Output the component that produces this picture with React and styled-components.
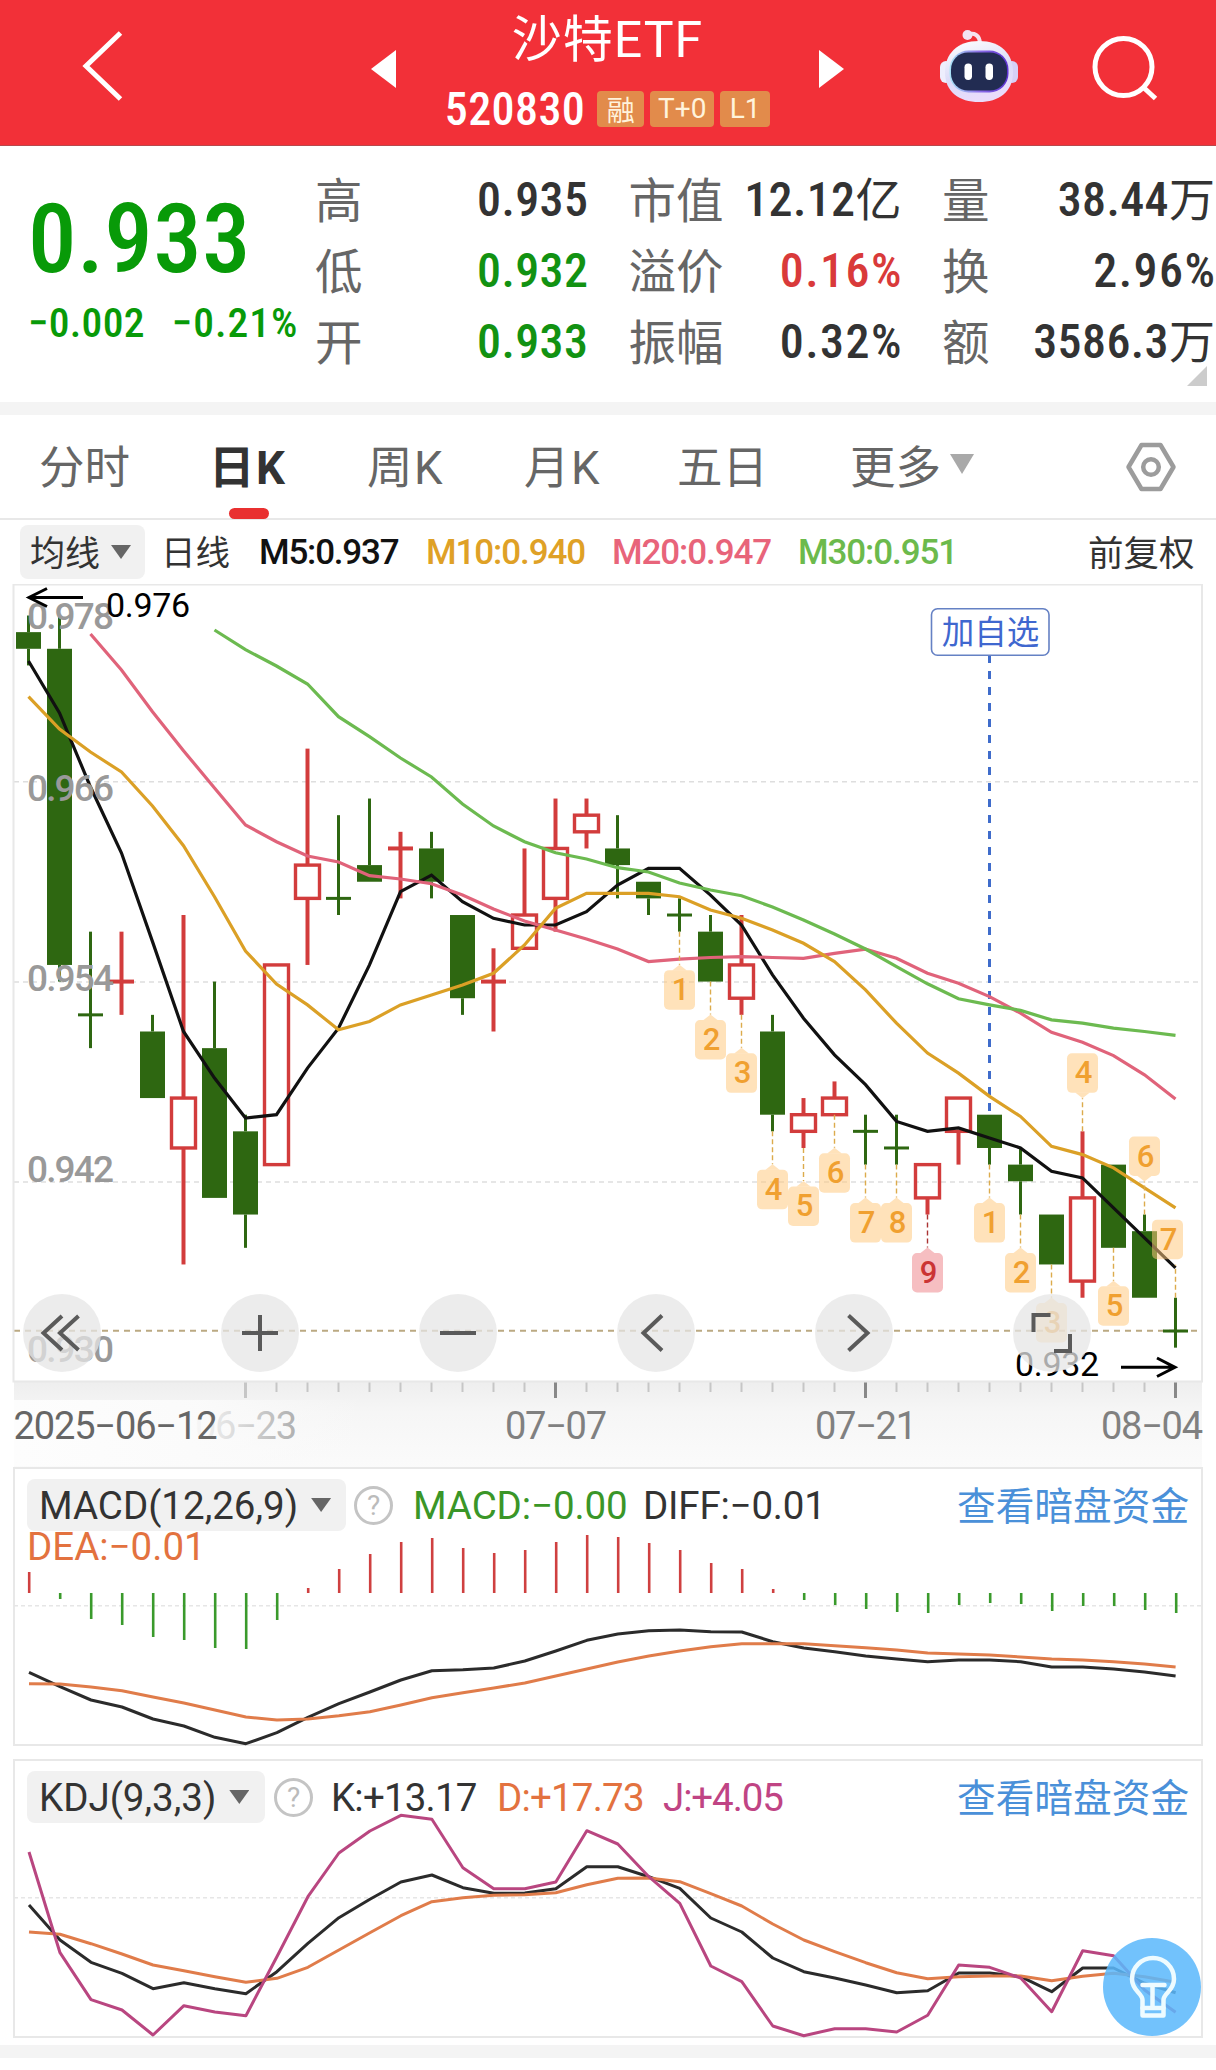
import React from 'react'
import styled, { createGlobalStyle } from 'styled-components'

const GlobalStyle = createGlobalStyle`
  * { box-sizing: border-box; }
  body {
    margin: 0;
    background: #fff;
    color: #333;
    font-family: Roboto, "Noto Sans CJK SC", sans-serif;
    -webkit-font-smoothing: antialiased;
  }
  svg { display: block; }
`

const Page = styled.div`
  width: 1216px;
  height: 2070px;
  overflow: hidden;
  background: #fff;
`

const Text = styled.span`
  font-size: ${(p) => p.$size}px;
  font-weight: ${(p) => p.$weight || 400};
  font-stretch: ${(p) => (p.$narrow ? 75 : 100)}%;
  letter-spacing: ${(p) => p.$spacing || 0}px;
  padding-bottom: ${(p) => p.$lift || 0}px;
  color: ${(p) => p.$color || 'inherit'};
  white-space: nowrap;
`

// ---------- header ----------
const Header = styled.header`
  display: grid;
  grid-template-columns: 371px 25px 423px 25px 95px 80px 64px 1fr;
  height: 146px;
  background: #f23038;
  border-bottom: 1px solid #b8484c;
  color: #fff;
`
const HeaderIcon = styled.div`
  grid-column: ${(p) => p.$col};
  margin-top: ${(p) => p.$top}px;
  padding-left: ${(p) => p.$left || 0}px;
`
const TitleBlock = styled.div`
  grid-column: 3;
  display: flex;
  flex-direction: column;
  align-items: center;
`
const Name = styled.div`
  height: 80px;
  line-height: 80px;
  font-size: 50px;
  letter-spacing: 1px;
`
const CodeRow = styled.div`
  display: flex;
  align-items: center;
  gap: 6px;
  height: 57px;
`
const Badges = styled.div`
  display: flex;
  gap: 6px;
  padding-left: 6px;
`
const Badge = styled.span`
  display: flex;
  align-items: center;
  justify-content: center;
  width: ${(p) => p.$w}px;
  height: 36px;
  border-radius: 4px;
  background: #e28b4b;
  color: #fff3dc;
  font-size: 28px;
`

// ---------- quote ----------
const Quote = styled.section`
  position: relative;
  display: flex;
  height: 256px;
`
const QuoteMain = styled.div`
  width: 316px;
  padding: 45px 0 0 28px;
  color: #089a08;
`
const Price = styled.div`
  font-size: 97px;
  line-height: 97px;
  font-weight: 500;
  font-stretch: 75%;
  letter-spacing: 0.4px;
`
const Changes = styled.div`
  display: flex;
  gap: 27px;
  margin-top: 10px;
  line-height: 50px;
`
const Stats = styled.div`
  display: grid;
  grid-template-columns: repeat(3, 272px);
  grid-auto-rows: 71px;
  column-gap: 41.5px;
  padding-top: 18px;
`
const Stat = styled.div`
  display: flex;
  align-items: center;
  justify-content: space-between;
  font-size: 47.5px;
`
const StatLabel = styled.span`
  margin-left: -1px;
  padding-bottom: 5px;
  color: #666;
`
const StatValue = styled.span`
  color: ${(p) => p.$color || '#333'};
  font-size: 48px;
  line-height: 71px;
  font-weight: 500;
  font-stretch: 75%;
  letter-spacing: ${(p) => p.$spacing}px;
  margin-right: ${(p) => -p.$spacing}px;
`
const Unit = styled.span`
  font-size: 46px;
  font-weight: 400;
  line-height: 1;
`
const Corner = styled.div`
  position: absolute;
  right: 9px;
  bottom: 16px;
  border-left: 20px solid transparent;
  border-bottom: 20px solid #ccc;
`
const Band = styled.div`
  height: 13px;
  margin-top: ${(p) => p.$top || 0}px;
  background: #f4f4f4;
`

// ---------- tabs ----------
const Tabs = styled.nav`
  display: grid;
  grid-template-columns: 173px 155px 157px 153px 173px 275px 1fr;
  align-items: center;
  height: 105px;
  padding-left: 39px;
  border-bottom: 2px solid #e8e8e8;
  font-size: 45.5px;
  color: #666;
`
const Tab = styled.div`
  position: relative;
  display: flex;
  align-items: center;
  gap: 9px;
  height: 100%;
  padding-bottom: 5px;
  margin-left: ${(p) => (p.$on ? -3 : 0)}px;
  letter-spacing: ${(p) => (p.$wide ? 1.5 : 0)}px;
  font-weight: ${(p) => (p.$on ? 700 : 400)};
  color: ${(p) => (p.$on ? '#333' : '#666')};
  &::after {
    content: '';
    display: ${(p) => (p.$on ? 'block' : 'none')};
    position: absolute;
    left: 20px;
    bottom: -1px;
    width: 40px;
    height: 11px;
    border-radius: 6px;
    background: #e93030;
  }
`
const Caret = styled.i`
  flex: none;
  width: ${(p) => p.$w}px;
  height: ${(p) => p.$h}px;
  background: ${(p) => p.$color};
  clip-path: polygon(0 0, 100% 0, 50% 100%);
`

const MaRow = styled.div`
  display: grid;
  grid-template-columns: 141px 98px 167px 186px 186px 290px 1fr;
  align-items: center;
  height: 64px;
  padding-left: 20px;
`
const Chip = styled.div`
  display: flex;
  align-items: center;
  gap: ${(p) => p.$gap}px;
  width: ${(p) => p.$w}px;
  height: ${(p) => p.$h}px;
  padding-left: ${(p) => p.$pad}px;
  border-radius: 8px;
  background: #f1f1f1;
`

// ---------- charts ----------
const ChartArea = styled.section`
  position: relative;
  height: 883px;
`
const Controls = styled.div`
  position: absolute;
  left: 23px;
  top: 710px;
  display: flex;
  gap: 120px;
`
const RoundButton = styled.button`
  width: 78px;
  height: 78px;
  padding: 0;
  border: 0;
  border-radius: 50%;
  background: rgba(229, 229, 229, 0.74);
`
const Panel = styled.section`
  display: grid;
  height: 279px;
  margin-bottom: ${(p) => p.$bottom || 0}px;
  & > * {
    grid-area: 1 / 1;
  }
`
const PanelHead = styled.div`
  display: grid;
  grid-template-columns: ${(p) => p.$cols};
  grid-template-rows: 52px 40px;
  align-content: start;
  align-items: center;
  padding: 12px 0 0 27px;
  z-index: 1;
`
const HeadRow2 = styled.div`
  grid-column: 1 / -1;
  line-height: 40px;
`
const Help = styled.span`
  display: flex;
  align-items: center;
  justify-content: center;
  width: 39px;
  height: 39px;
  border: 3px solid #c4c4c4;
  border-radius: 50%;
  color: #bbb;
  font-size: 28px;
`
const Float = styled.div`
  position: absolute;
  left: 1103px;
  top: 1938px;
`

const GREEN = '#2e6711'
const RED = '#d23c3c'
const px = (i) => 28.5 + 31 * i
// one tick is 0.001 below the 0.976 high
const py = (k) => 615.5 + 16.64 * k

// [up, high, body top, body bottom, low] in ticks
const candles = [
  [0, 0, 1, 2, 3], [0, 0, 2, 21, 22], [0, 19, 24, 24, 26], [1, 19, 22, 22, 24], [0, 24, 25, 29, 29],
  [1, 18, 29, 32, 39], [0, 22, 26, 35, 35], [0, 30, 31, 36, 38], [1, 21, 21, 33, 33], [1, 8, 15, 17, 21],
  [0, 12, 17, 17, 18], [0, 11, 15, 16, 16], [1, 13, 14, 14, 17], [0, 13, 14, 16, 17], [0, 18, 18, 23, 24],
  [1, 20, 22, 22, 25], [1, 14, 18, 20, 20], [1, 11, 14, 17, 19], [1, 11, 12, 13, 14], [0, 12, 14, 15, 17],
  [0, 16, 16, 17, 18], [0, 17, 18, 18, 19], [0, 18, 19, 22, 22], [1, 18, 21, 23, 24], [0, 24, 25, 30, 31],
  [1, 29, 30, 31, 32], [1, 28, 29, 30, 30], [0, 30, 31, 31, 33], [0, 30, 32, 32, 33], [1, 33, 33, 35, 36],
  [1, 29, 29, 31, 33], [0, 30, 30, 32, 33], [0, 32, 33, 34, 36], [0, 36, 36, 39, 39], [1, 31, 35, 40, 41],
  [0, 33, 33, 38, 38], [0, 36, 37, 41, 41], [0, 41, 43, 43, 44],
]
const closes = candles.map((c) => (c[0] ? c[2] : c[3]))

// averages whose window starts before the first candle are given as y values
const averages = [
  { n: 5, color: '#111', from: 0, head: [661, 713, 787, 853] },
  { n: 20, color: '#e0637a', from: 2, head: [634, 670, 711.7, 750.7, 788, 825, 841.7, 856, 862, 875.7, 879, 883.7, 895, 909, 921, 930, 939] },
  { n: 10, color: '#dba026', from: 0, head: [696.7, 729, 752, 772, 806, 845.7, 896.7, 951, 984] },
  { n: 30, color: '#6cba50', from: 6, head: [630, 649.7, 666, 684, 716.7, 736.7, 758, 777, 804, 826, 841.7, 852.7, 859, 867.7, 872, 883, 890, 895.7, 907, 920, 934, 949, 966.7] },
]
const averagePoints = ({ n, from, head }) => {
  const pts = head.map((y, i) => `${px(from + i)},${y}`)
  for (let i = from + head.length; i < closes.length; i++) {
    const sum = closes.slice(i - n + 1, i + 1).reduce((a, b) => a + b, 0)
    pts.push(`${px(i)},${py(sum / n).toFixed(1)}`)
  }
  return pts.join(' ')
}

// [candle, number, above]
const marks = [
  [21, 1], [22, 2], [23, 3], [24, 4], [25, 5], [26, 6], [27, 7], [28, 8], [29, 9],
  [31, 1], [32, 2], [33, 3], [34, 4, 1], [35, 5], [36, 6, 1], [37, 7, 1],
]

function Candle({ i, c }) {
  const [up, high, top, bottom, low] = c
  const x = px(i)
  const color = up ? RED : GREEN
  const w = up ? 4 : 3
  return (
    <g stroke={color} strokeWidth={w} fill="none">
      {high < top && <line x1={x} x2={x} y1={py(high)} y2={py(top)} />}
      {low > bottom && <line x1={x} x2={x} y1={py(bottom)} y2={py(low)} />}
      {top === bottom && <line x1={x - 12.5} x2={x + 12.5} y1={py(top)} y2={py(top)} />}
      {top !== bottom && up === 1 && <rect x={x - 12} y={py(top)} width="24" height={py(bottom) - py(top)} strokeWidth="3.4" />}
      {top !== bottom && up === 0 && <rect x={x - 12.5} y={py(top)} width="25" height={py(bottom) - py(top)} fill={color} stroke="none" />}
    </g>
  )
}

function Mark({ i, n, above }) {
  const x = px(i)
  const edge = py(above ? candles[i][1] : candles[i][4])
  const s = above ? -1 : 1
  const tip = edge + 33 * s
  // the last tag is pushed back inside the frame
  const cx = Math.min(x, 1167.5)
  const hot = n === 9
  const top = above ? tip - 45 : tip + 5.5
  return (
    <g>
      <line x1={x} x2={x} y1={edge} y2={tip} stroke={hot ? '#a33' : '#dcab4c'} strokeWidth="1.4" strokeDasharray="5 3" />
      <g fill={hot ? '#ee8489' : '#ffc87c'} fillOpacity="0.53">
        <path
          d={`M${cx - 10.5} ${top}h21a5 5 0 0 1 5 5v29.5a5 5 0 0 1 -5 5h-21a5 5 0 0 1 -5 -5v-29.5a5 5 0 0 1 5 -5z`}
        />
        {cx === x && <path d={`M${x} ${tip}l-7 ${5.5 * s}h14z`} />}
      </g>
      <text x={cx + 1} y={top + 30} fontSize="31" fontWeight="500" textAnchor="middle" fill={hot ? '#cb3434' : '#f0a030'}>
        {n}
      </text>
    </g>
  )
}

function PriceChart() {
  const grid = [781.8, 982, 1182]
  const scale = [['0.978', 629], ['0.966', 800.5], ['0.954', 991], ['0.942', 1181.5], ['0.930', 1362]]
  return (
    <svg width="1216" height="883" viewBox="0 584 1216 883">
      <defs>
        <linearGradient id="axisShade" x1="0" x2="0" y1="0" y2="1">
          <stop offset="0" stopColor="#eeeeee" />
          <stop offset="0.35" stopColor="#f6f6f6" />
          <stop offset="1" stopColor="#fbfbfb" />
        </linearGradient>
        <linearGradient id="axisFade" x1="0" x2="1" y1="0" y2="0">
          <stop offset="0" stopColor="#fdfdfd" />
          <stop offset="0.53" stopColor="#fbfbfb" stopOpacity="0.95" />
          <stop offset="1" stopColor="#fafafa" stopOpacity="0" />
        </linearGradient>
      </defs>
      <rect x="14" y="1381" width="1188" height="90" fill="url(#axisShade)" />
      {grid.map((y) => (
        <line key={y} x1="14" x2="1202" y1={y} y2={y} stroke="#dedede" strokeWidth="1.4" strokeDasharray="5 4" />
      ))}
      <line x1="14" x2="1202" y1="1330.7" y2="1330.7" stroke="#bba982" strokeWidth="2" strokeDasharray="6 5" />

      {candles.map((c, i) => (
        <Candle key={i} i={i} c={c} />
      ))}
      <line x1="989.5" x2="989.5" y1="655" y2="1112" stroke="#3f6ccb" strokeWidth="3" strokeDasharray="8 8" />
      {averages.map((a) => (
        <polyline key={a.n} points={averagePoints(a)} fill="none" stroke={a.color} strokeWidth="3.2" />
      ))}
      {marks.map(([i, n, above]) => (
        <Mark key={i} i={i} n={n} above={above} />
      ))}

      <rect x="931.5" y="608.7" width="117.5" height="46.5" rx="6" fill="#fff" stroke="#6581c4" strokeWidth="1.6" />
      <text x="990.5" y="644" fontSize="32.5" textAnchor="middle" fill="#3f67cf">加自选</text>

      {scale.map(([t, y]) => (
        <text key={t} x="27" y={y} fontSize="37" fontWeight="500" fill="#999" textLength="87">{t}</text>
      ))}
      <text x="106" y="617" fontSize="34" fill="#000" textLength="84">0.976</text>
      <text x="1015" y="1376" fontSize="34" fill="#000" textLength="84">0.932</text>
      <g stroke="#000" strokeWidth="3" fill="none">
        <path d="M83 597.5H29M47 588.5L29 597.5L47 606.5" />
        <path d="M1121 1367.3H1175M1157 1358L1175 1367.3L1157 1376.5" />
      </g>

      <path d="M13.5 1381.5V584.5H1202V1381.5Z" fill="none" stroke="#e8e8e8" strokeWidth="2" />
      {candles.map((_, i) => {
        if (i < 7) return null
        const major = i % 10 === 7
        return (
          <line key={i} x1={px(i)} x2={px(i)} y1="1382.5" y2={major ? 1398 : 1392} stroke={major && i > 7 ? '#888' : '#c6c6c6'} strokeWidth={major ? 3 : 2} />
        )
      })}
      <g fontSize="38" fill="#808080">
        <text x="195" y="1439" textLength="102">06−23</text>
        <rect x="14" y="1400" width="350" height="66" fill="url(#axisFade)" />
        <text x="505" y="1439" textLength="102">07−07</text>
        <text x="815" y="1439" textLength="102">07−21</text>
        <text x="1101" y="1439" textLength="102">08−04</text>
        <text x="13.5" y="1439" textLength="204" fill="#666">2025−06−12</text>
      </g>
    </svg>
  )
}

const controlIcons = [
  'M0 -17L-18.5 0L0 17M16.5 -17L-2 0L16.5 17',
  'M-18 0H18M0 -18V18',
  'M-18 0H18',
  'M6 -17.5L-12.5 0L6 17.5',
  'M-5.5 -17.5L13.5 0L-5.5 17.5',
  'M-18.5 -1V-18H-1.5M18 1V18H2',
]

const histogram = [21, -6, -26, -32, -44, -47, -55, -56, -27, 5, 24, 39, 51, 55, 45, 40, 43, 51, 58, 56, 50, 43, 30, 24, 4, -7, -12, -16, -19, -20, -12, -10, -11, -18, -13, -13, -17, -20]

// lines are stored in thirds of a pixel below each panel's own origin
const diff = [637, 680, 720, 741, 777, 798, 832, 851, 818, 772, 731, 696, 660, 632, 629, 624, 603, 573, 541, 522, 512, 510, 515, 516, 545, 564, 575, 588, 597, 605, 600, 600, 605, 621, 621, 627, 636, 648]
const dea = [671, 672, 681, 692, 711, 729, 750, 771, 780, 777, 767, 755, 735, 713, 698, 684, 669, 648, 627, 606, 588, 573, 560, 551, 551, 551, 557, 563, 570, 579, 582, 585, 591, 597, 600, 605, 612, 621]
const kLine = [465, 570, 637, 670, 716, 698, 716, 731, 665, 580, 503, 448, 396, 375, 413, 430, 429, 416, 350, 350, 380, 415, 504, 546, 624, 665, 684, 705, 728, 722, 669, 669, 680, 725, 654, 654, 700, 728]
const dLine = [546, 553, 581, 612, 645, 662, 680, 697, 685, 652, 600, 548, 497, 455, 443, 436, 434, 428, 404, 385, 384, 395, 431, 468, 522, 570, 605, 638, 668, 686, 680, 678, 678, 692, 679, 670, 680, 697]
const jLine = [306, 608, 749, 780, 855, 767, 786, 797, 620, 440, 309, 243, 196, 208, 353, 416, 416, 396, 242, 282, 380, 460, 648, 695, 828, 857, 836, 836, 846, 796, 645, 652, 684, 785, 602, 617, 720, 787]

function Line({ data, origin, color }) {
  const pts = data.map((v, i) => `${(29 + 30.99 * i).toFixed(1)},${(origin + v / 3).toFixed(1)}`).join(' ')
  return <polyline points={pts} fill="none" stroke={color} strokeWidth="3" strokeLinejoin="round" />
}

function PanelFrame({ y, mid, children }) {
  return (
    <svg width="1216" height="279" viewBox={`0 ${y} 1216 279`}>
      <rect x="14" y={y + 1} width="1188" height="277" fill="none" stroke="#e8e8e8" strokeWidth="2" />
      <line x1="14" x2="1202" y1={mid} y2={mid} stroke="#e6e6e6" strokeWidth="1.5" strokeDasharray="4 3" />
      {children}
    </svg>
  )
}

function Robot() {
  return (
    <svg width="80" height="76" viewBox="0 0 80 76">
      <defs>
        <linearGradient id="shell" x1="0" x2="0.3" y1="0" y2="1">
          <stop offset="0" stopColor="#ffffff" />
          <stop offset="0.6" stopColor="#dcdcf8" />
          <stop offset="1" stopColor="#e9dcfb" />
        </linearGradient>
        <linearGradient id="rim" x1="0" x2="1">
          <stop offset="0" stopColor="#a9e4f5" />
          <stop offset="0.5" stopColor="#8d6fe8" />
          <stop offset="1" stopColor="#5b2fd0" />
        </linearGradient>
      </defs>
      <path d="M28 5C35 2 41 5 41 14" fill="none" stroke="#f6e2ee" strokeWidth="4" />
      <circle cx="28.5" cy="5" r="5" fill="#f3e3f3" />
      <rect x="1" y="31" width="12" height="22" rx="6" fill="#eeeefd" />
      <rect x="67" y="31" width="12" height="22" rx="6" fill="#d6d0f6" />
      <path d="M40 11C62 11 74 24 74 42C74 62 60 72 40 72C20 72 6 62 6 42C6 24 18 11 40 11Z" fill="url(#shell)" />
      <rect x="10.5" y="20.5" width="59" height="42" rx="19" fill="url(#rim)" />
      <rect x="12" y="22.5" width="56" height="38" rx="17" fill="#222c52" />
      <rect x="25.5" y="33.5" width="7.5" height="16.5" rx="3.7" fill="#fff" />
      <rect x="46.5" y="33.5" width="7.5" height="16.5" rx="3.7" fill="#fff" />
    </svg>
  )
}

const UP = '#d93a3a'
const DOWN = '#129212'
// label, number, unit, color
const stats = [
  ['高', '0.935', ''], ['市值', '12.12', '亿'], ['量', '38.44', '万'],
  ['低', '0.932', '', DOWN], ['溢价', '0.16%', '', UP], ['换', '2.96%', ''],
  ['开', '0.933', '', DOWN], ['振幅', '0.32%', ''], ['额', '3586.3', '万'],
]

function App() {
  return (
    <Page>
      <GlobalStyle />
      <Header>
        <HeaderIcon $col={1} $top={31} $left={82}>
          <svg width="42" height="70" viewBox="0 0 42 70">
            <path d="M38.5 2L4 35L38.5 68" fill="none" stroke="#fff" strokeWidth="5" />
          </svg>
        </HeaderIcon>
        <HeaderIcon $col={2} $top={50}>
          <svg width="25" height="38"><path d="M25 0V38L0 19Z" fill="#fff" /></svg>
        </HeaderIcon>
        <TitleBlock>
          <Name>沙特ETF</Name>
          <CodeRow>
            <Text $size={46} $narrow $weight={500} $spacing={0.4}>520830</Text>
            <Badges>
              <Badge $w={47}>融</Badge>
              <Badge $w={64}>T+0</Badge>
              <Badge $w={50}>L1</Badge>
            </Badges>
          </CodeRow>
        </TitleBlock>
        <HeaderIcon $col={4} $top={50}>
          <svg width="25" height="38"><path d="M0 0V38L25 19Z" fill="#fff" /></svg>
        </HeaderIcon>
        <HeaderIcon $col={6} $top={30}>
          <Robot />
        </HeaderIcon>
        <HeaderIcon $col={8} $top={34} $left={7}>
          <svg width="70" height="70" viewBox="0 0 70 70" fill="none" stroke="#fff" strokeWidth="5">
            <circle cx="33.5" cy="33" r="28.5" />
            <path d="M53 53L65.5 64.5" />
          </svg>
        </HeaderIcon>
      </Header>

      <Quote>
        <QuoteMain>
          <Price>0.933</Price>
          <Changes>
            <Text $size={41.5} $narrow $weight={500} $spacing={0.3}>−0.002</Text>
            <Text $size={41.5} $narrow $weight={500} $spacing={1}>−0.21%</Text>
          </Changes>
        </QuoteMain>
        <Stats>
          {stats.map(([label, value, unit, color]) => (
            <Stat key={label}>
              <StatLabel>{label}</StatLabel>
              <StatValue $color={color} $spacing={value.endsWith('%') ? 1.5 : 0.4}>
                {value}
                {unit && <Unit>{unit}</Unit>}
              </StatValue>
            </Stat>
          ))}
        </Stats>
        <Corner />
      </Quote>
      <Band />

      <Tabs>
        <Tab>分时</Tab>
        <Tab $on $wide>日K</Tab>
        <Tab $wide>周K</Tab>
        <Tab $wide>月K</Tab>
        <Tab>五日</Tab>
        <Tab>更多<Caret $w={24} $h={20} $color="#a9a9a9" /></Tab>
        <svg width="52" height="50" viewBox="0 0 52 50" fill="none" stroke="#9c9c9c" strokeWidth="4.5" strokeLinejoin="round">
          <path d="M16.5 3H35.5L48.5 25L35.5 47H16.5L3.5 25Z" />
          <circle cx="26" cy="25" r="7.8" />
        </svg>
      </Tabs>

      <MaRow>
        <Chip $w={125} $h={54} $pad={10} $gap={11}>
          <Text $size={35} $lift={4}>均线</Text>
          <Caret $w={20} $h={14} $color="#666" />
        </Chip>
        <Text $size={34.5} $lift={4}>日线</Text>
        <Text $size={35} $weight={500} $spacing={-1.2} $color="#111">M5:0.937</Text>
        <Text $size={35} $weight={500} $spacing={-1.1} $color="#dfa126">M10:0.940</Text>
        <Text $size={35} $weight={500} $spacing={-1.1} $color="#e8647a">M20:0.947</Text>
        <Text $size={35} $weight={500} $spacing={-1.1} $color="#6cba4c">M30:0.951</Text>
        <Text $size={35.5} $lift={4}>前复权</Text>
      </MaRow>

      <ChartArea>
        <PriceChart />
        <Controls>
          {controlIcons.map((d) => (
            <RoundButton key={d}>
              <svg width="78" height="78" viewBox="-39 -39 78 78">
                <path d={d} fill="none" stroke="#5a5a5a" strokeWidth="4" />
              </svg>
            </RoundButton>
          ))}
        </Controls>
      </ChartArea>

      <Panel $bottom={13}>
        <PanelFrame y={1467} mid={1605.7}>
          {histogram.map((h, i) => (
            <line key={i} x1={px(i) + 0.7} x2={px(i) + 0.7} y1="1593" y2={1593 - h} stroke={h > 0 ? '#cf4040' : '#3a9a2c'} strokeWidth="2.6" />
          ))}
          <Line data={diff} origin={1460} color="#2b2b2b" />
          <Line data={dea} origin={1460} color="#e07c4a" />
        </PanelFrame>
        <PanelHead $cols="327px 59px 230px 314px 1fr">
          <Chip $w={319} $h={52} $pad={12} $gap={13}>
            <Text $size={38.5}>MACD(12,26,9)</Text>
            <Caret $w={20} $h={14} $color="#666" />
          </Chip>
          <Help>?</Help>
          <Text $size={38.5} $spacing={-0.1} $color="#3a9628">MACD:−0.00</Text>
          <Text $size={38.5} $spacing={-0.2}>DIFF:−0.01</Text>
          <Text $size={38.7} $lift={5} $color="#4a90d9">查看暗盘资金</Text>
          <HeadRow2>
            <Text $size={38.5} $color="#e3723f">DEA:−0.01</Text>
          </HeadRow2>
        </PanelHead>
      </Panel>

      <Panel>
        <PanelFrame y={1759} mid={1897.7}>
          <Line data={kLine} origin={1750} color="#2b2b2b" />
          <Line data={dLine} origin={1750} color="#e07c4a" />
          <Line data={jLine} origin={1750} color="#b94680" />
        </PanelFrame>
        <PanelHead $cols="247px 57px 166px 166px 294px 1fr">
          <Chip $w={238} $h={52} $pad={12} $gap={13}>
            <Text $size={38.5}>KDJ(9,3,3)</Text>
            <Caret $w={20} $h={14} $color="#666" />
          </Chip>
          <Help>?</Help>
          <Text $size={38.5} $spacing={-0.8}>K:+13.17</Text>
          <Text $size={38.5} $spacing={-0.8} $color="#e3723f">D:+17.73</Text>
          <Text $size={38.5} $spacing={-1.1} $color="#c04484">J:+4.05</Text>
          <Text $size={38.7} $lift={5} $color="#4a90d9">查看暗盘资金</Text>
        </PanelHead>
      </Panel>
      <Band $top={7} />

      <Float>
        <svg width="98" height="98" viewBox="-49 -49 98 98">
          <circle r="49" fill="#5bb8fb" fillOpacity="0.86" />
          <g fill="none" stroke="#eefbff" strokeWidth="4.5" strokeLinejoin="round" strokeLinecap="round">
            <path d="M-9.5 28.5V13C-9.5 6 -20 4 -20 -8A21 21 0 0 1 22 -8C22 4 11.5 6 11.5 13V28.5Z" />
            <path d="M-9.5 21H11.5M-9.5 -2H12.5M0.5 -2V20" />
          </g>
        </svg>
      </Float>
    </Page>
  )
}

export default App
